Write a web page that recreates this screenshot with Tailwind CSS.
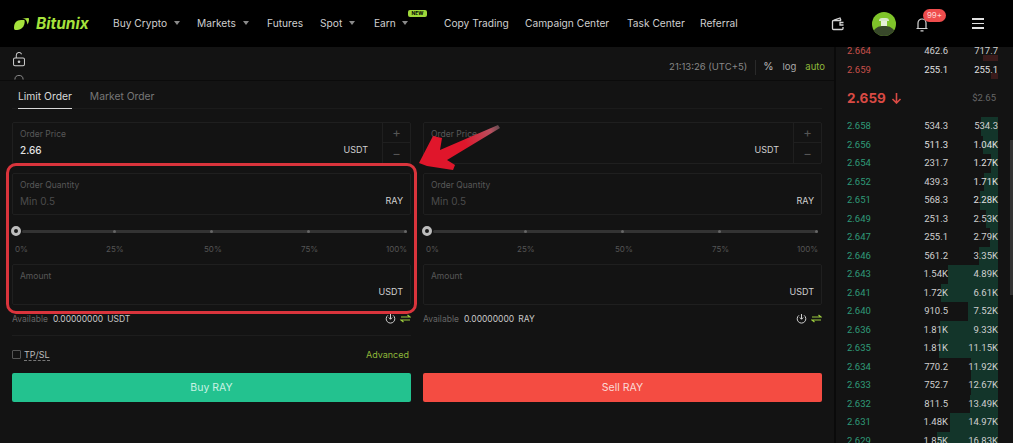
<!DOCTYPE html>
<html lang="en">
<head>
<meta charset="UTF-8" />
<meta name="viewport" content="width=device-width, initial-scale=1.0" />
<title>Bitunix</title>
<script src="https://cdn.jsdelivr.net/npm/@tailwindcss/browser@4"></script>
</head>
<body class="bg-[#131313] text-[#d8d8d8] font-['Inter',sans-serif]">
<div class="relative w-[1013px] h-[443px] overflow-hidden">

  <!-- top nav -->
  <header class="h-[47px] bg-black flex items-center relative z-10 text-[10.2px] text-[#cfcfcf]">
    <div class="w-[113px] pl-[14px] flex items-center gap-[7px] shrink-0">
      <svg class="w-[15px] h-[12px]" viewBox="0 0 15 12"><path fill="#a6e23c" d="M1.500 12C.2 12 0 11 0 9.500 0 5 2.500 2 7 2h2.500c.8 0 1.200.4 1.200 1.200C10.700 8 7.500 12 3 12H1.500Z"/><path fill="#a6e23c" d="M8 .6 14 0c.6 0 1 .4 1 1 0 2-.5 4-1.500 5.500-.3-2-.8-3.500-1.800-4.800C10.700 1 9.500.7 8 .6Z"/></svg>
      <span class="text-[15.500px] font-bold italic text-[#a6e23c] leading-none">Bitunix</span>
    </div>
    <nav class="flex items-center">
      <span class="w-[84px] flex items-center">Buy Crypto<i class="ml-[7px] w-0 h-0 border-x-[3px] border-x-transparent border-t-[4px] border-t-[#8a8a8a]"></i></span>
      <span class="w-[70px] flex items-center">Markets<i class="ml-[7px] w-0 h-0 border-x-[3px] border-x-transparent border-t-[4px] border-t-[#8a8a8a]"></i></span>
      <span class="w-[53px]">Futures</span>
      <span class="w-[54px] flex items-center">Spot<i class="ml-[7px] w-0 h-0 border-x-[3px] border-x-transparent border-t-[4px] border-t-[#8a8a8a]"></i></span>
      <span class="w-[70px] flex items-center relative">Earn<i class="ml-[6px] w-0 h-0 border-x-[3px] border-x-transparent border-t-[4px] border-t-[#8a8a8a]"></i>
        <b class="absolute left-[34px] -top-[6px] h-[7px] w-[19px] bg-[#9fd83a] rounded-[2px] text-[5px] leading-[7px] text-center text-black">NEW</b>
      </span>
      <span class="w-[81px]">Copy Trading</span>
      <span class="w-[102px]">Campaign Center</span>
      <span class="w-[73px]">Task Center</span>
      <span>Referral</span>
    </nav>
    <!-- right icons -->
    <div class="ml-auto flex items-center pr-[29px]">
      <svg class="w-[14px] h-[14px] mr-[27px]" viewBox="0 0 14 14" fill="none" stroke="#d5d5d5" stroke-width="1.300"><path d="M10 3.500H2.500a1 1 0 0 0-1 1v7a1 1 0 0 0 1 1H11a1 1 0 0 0 1-1V10M3 3l6-2 1 2.500M12.500 5.500H9v2.500h3.500"/></svg>
      <div class="w-[24px] h-[24px] rounded-full bg-[#7fc42a] overflow-hidden flex flex-col items-center mr-[19px]">
        <div class="w-[10px] h-[3px] bg-[#d8e8c8] rounded-t-full mt-[6px]"></div>
        <div class="w-[6px] h-[5px] bg-[#e6efd8]"></div>
        <div class="w-[24px] h-[10px] bg-[#38482a] rounded-t-[12px]"></div>
      </div>
      <div class="relative mr-[43px] w-[14px] h-[16px]">
        <svg class="w-[14px] h-[16px]" viewBox="0 0 14 16" fill="none" stroke="#d5d5d5" stroke-width="1.200"><path d="M1.500 12.500h11M3 12.500V7a4 4 0 0 1 8 0v5.500M5.500 14.800h3"/></svg>
        <span class="absolute left-[8px] -top-[7px] w-[23px] h-[13px] rounded-full bg-[#ef4d4d] text-[#ffd5d5] text-[8px] leading-[13px] text-center">99+</span>
      </div>
      <div class="w-[12px] flex flex-col gap-[3px]">
        <i class="block h-[1.500px] bg-[#e0e0e0]"></i>
        <i class="block h-[1.500px] bg-[#e0e0e0]"></i>
        <i class="block h-[1.500px] bg-[#e0e0e0]"></i>
      </div>
    </div>
  </header>

  <div class="flex h-[396px]">
    <!-- trade panel -->
    <main class="w-[836px] shrink-0 border-r-2 border-r-[#0a0a0a]">
      <div class="h-[34px] border-b border-b-[#0b0b0b] flex overflow-hidden">
        <div class="pl-[12px] pt-[5px] flex flex-col items-start gap-[8px]">
          <svg class="w-[14px] h-[16px]" viewBox="0 0 14 16" fill="none" stroke="#cfcfcf" stroke-width="1.100"><rect x="1" y="6.500" width="12" height="8.500" rx="1.500"/><path d="M4 6.500V3.500a3 3 0 0 1 5.800-1"/><circle cx="7" cy="10.700" r=".9" fill="#cfcfcf"/></svg>
          <svg class="w-[14px] h-[6px]" viewBox="0 0 14 6" fill="none" stroke="#8a8a8a" stroke-width="1.100"><path d="M2.500 5a4.500 4.500 0 0 1 9 0"/></svg>
        </div>
        <div class="ml-auto h-[34px] pt-[6px] flex items-center text-[9.500px] pr-[9px]">
          <span class="text-[#888]">21:13:26 (UTC+5)</span>
          <i class="h-[15px] w-px bg-[#2a2a2a] ml-[8px] mr-[7px]"></i>
          <span class="text-[#bbb] text-[10.500px] mr-[9px]">%</span>
          <span class="text-[#aaa] mr-[9px]">log</span>
          <span class="text-[#8fb83a]">auto</span>
        </div>
      </div>

      <div class="h-[28px] ml-[12px] mr-[12px] border-b border-b-[#1b1b1b] flex text-[10.300px] pl-[6px]">
        <span class="h-[28px] pt-[8px] border-b-[1.500px] border-b-[#d8d8d8] text-[#d8d8d8]">Limit Order</span>
        <span class="pt-[8px] ml-[18px] text-[#777]">Market Order</span>
      </div>

      <div class="grid grid-cols-[399px_399px] gap-[12px] px-[12px] pt-[13px]">
        <!-- buy -->
        <section class="flex flex-col h-[280px]">
          <div class="h-[42px] border border-[#1f1f1f] rounded-[2px] flex">
            <div class="flex-1 pl-[7px] pr-[14px] pt-[6px]">
              <p class="text-[8.500px] leading-[11px] text-[#585858]">Order Price</p>
              <div class="flex justify-between items-center mt-[3px] leading-[14px]"><span class="text-[10px] text-[#e2e2e2] font-medium">2.66</span><span class="text-[9px] text-[#d0d0d0]">USDT</span></div>
            </div>
            <div class="w-[28px] border-l border-l-[#1f1f1f] flex flex-col text-center text-[#555]">
              <span class="h-[21px] border-b border-b-[#1f1f1f] text-[13px] leading-[19px]">+</span>
              <span class="text-[13px] leading-[20px]">−</span>
            </div>
          </div>
          <div class="h-[42px] mt-[9px] border border-[#1f1f1f] rounded-[2px] px-[7px] pt-[6px]">
            <p class="text-[8.500px] leading-[11px] text-[#585858]">Order Quantity</p>
            <div class="flex justify-between items-center mt-[3px] leading-[14px]"><span class="text-[10px] text-[#4c4c4c]">Min 0.5</span><span class="text-[9px] text-[#d0d0d0]">RAY</span></div>
          </div>
          <div class="h-[49px]">
            <div class="relative h-[3px] mt-[15px] ml-[10px] mr-[4px] bg-[#333] rounded-full flex justify-between items-center pl-[91px]">
              <i class="absolute -left-[11px] w-[10px] h-[10px] rounded-full border-[3px] border-[#bdbdbd] bg-[#1a1a1a]"></i>
              <i class="w-[3px] h-[3px] rounded-full bg-[#666]"></i>
              <i class="w-[3px] h-[3px] rounded-full bg-[#666]"></i>
              <i class="w-[3px] h-[3px] rounded-full bg-[#666]"></i>
              <i class="w-[3px] h-[3px] rounded-full bg-[#666]"></i>
            </div>
            <div class="flex pl-[3px] text-[8px] text-[#555] mt-[11px] leading-[11px]"><span class="w-[91px]">0%</span><span class="w-[98px]">25%</span><span class="w-[97px]">50%</span><span class="w-[85px]">75%</span><span>100%</span></div>
          </div>
          <div class="h-[42px] border border-[#1f1f1f] rounded-[2px] px-[7px] pt-[6px]">
            <p class="text-[8.500px] leading-[11px] text-[#585858]">Amount</p>
            <div class="flex justify-end mt-[3px] leading-[14px] text-[9px] text-[#d0d0d0]">USDT</div>
          </div>
          <div class="h-[27px] flex items-center text-[8.500px] text-[#c8c8c8]">
            <span class="text-[#666] mr-[5px]">Available</span><span>0.00000000</span><span class="ml-[4px]">USDT</span>
            <svg class="ml-auto w-[11px] h-[11px]" viewBox="0 0 11 11" fill="none" stroke="#d0d0d0" stroke-width="1"><path d="M3 2.300a4.300 4.300 0 1 0 5 0M5.500 1v5M3.800 4.500l1.700 1.800 1.700-1.800"/></svg>
            <svg class="ml-[4px] w-[11px] h-[9px]" viewBox="0 0 11 9" fill="none" stroke="#9ccb3e" stroke-width="1.200"><path d="M1 3h9L7.500 1M10 6H1l2.500 2"/></svg>
          </div>
          <div class="h-px bg-[#1d1d1d] mt-[3px]"></div>
          <div class="h-[37px] flex items-center text-[9px]">
            <i class="w-[9px] h-[9px] border border-[#555] rounded-[1px] mr-[3px]"></i>
            <span class="text-[#bbb] border-b border-dashed border-b-[#777] leading-[11px]">TP/SL</span>
            <span class="ml-auto mr-[2px] text-[#8fb83a]">Advanced</span>
          </div>
          <button class="h-[29px] w-full rounded-[2px] bg-[#23c28f] text-[#c9f2e4] text-[10.500px]">Buy RAY</button>
        </section>

        <!-- sell -->
        <section class="flex flex-col h-[280px]">
          <div class="h-[42px] border border-[#1f1f1f] rounded-[2px] flex">
            <div class="flex-1 pl-[7px] pr-[14px] pt-[6px]">
              <p class="text-[8.500px] leading-[11px] text-[#585858]">Order Price</p>
              <div class="flex justify-end items-center mt-[3px] leading-[14px]"><span class="text-[9px] text-[#d0d0d0]">USDT</span></div>
            </div>
            <div class="w-[28px] border-l border-l-[#1f1f1f] flex flex-col text-center text-[#555]">
              <span class="h-[21px] border-b border-b-[#1f1f1f] text-[13px] leading-[19px]">+</span>
              <span class="text-[13px] leading-[20px]">−</span>
            </div>
          </div>
          <div class="h-[42px] mt-[9px] border border-[#1f1f1f] rounded-[2px] px-[7px] pt-[6px]">
            <p class="text-[8.500px] leading-[11px] text-[#585858]">Order Quantity</p>
            <div class="flex justify-between items-center mt-[3px] leading-[14px]"><span class="text-[10px] text-[#4c4c4c]">Min 0.5</span><span class="text-[9px] text-[#d0d0d0]">RAY</span></div>
          </div>
          <div class="h-[49px]">
            <div class="relative h-[3px] mt-[15px] ml-[10px] mr-[4px] bg-[#333] rounded-full flex justify-between items-center pl-[91px]">
              <i class="absolute -left-[11px] w-[10px] h-[10px] rounded-full border-[3px] border-[#bdbdbd] bg-[#1a1a1a]"></i>
              <i class="w-[3px] h-[3px] rounded-full bg-[#666]"></i>
              <i class="w-[3px] h-[3px] rounded-full bg-[#666]"></i>
              <i class="w-[3px] h-[3px] rounded-full bg-[#666]"></i>
              <i class="w-[3px] h-[3px] rounded-full bg-[#666]"></i>
            </div>
            <div class="flex pl-[3px] text-[8px] text-[#555] mt-[11px] leading-[11px]"><span class="w-[91px]">0%</span><span class="w-[98px]">25%</span><span class="w-[97px]">50%</span><span class="w-[85px]">75%</span><span>100%</span></div>
          </div>
          <div class="h-[42px] border border-[#1f1f1f] rounded-[2px] px-[7px] pt-[6px]">
            <p class="text-[8.500px] leading-[11px] text-[#585858]">Amount</p>
            <div class="flex justify-end mt-[3px] leading-[14px] text-[9px] text-[#d0d0d0]">USDT</div>
          </div>
          <div class="h-[27px] flex items-center text-[8.500px] text-[#c8c8c8]">
            <span class="text-[#666] mr-[5px]">Available</span><span>0.00000000</span><span class="ml-[4px]">RAY</span>
            <svg class="ml-auto w-[11px] h-[11px]" viewBox="0 0 11 11" fill="none" stroke="#d0d0d0" stroke-width="1"><path d="M3 2.300a4.300 4.300 0 1 0 5 0M5.500 1v5M3.800 4.500l1.700 1.800 1.700-1.800"/></svg>
            <svg class="ml-[4px] w-[11px] h-[9px]" viewBox="0 0 11 9" fill="none" stroke="#9ccb3e" stroke-width="1.200"><path d="M1 3h9L7.500 1M10 6H1l2.500 2"/></svg>
          </div>
          <div class="h-[41px]"></div>
          <button class="h-[29px] w-full rounded-[2px] bg-[#f44c42] text-[#fbd9d6] text-[10.500px]">Sell RAY</button>
        </section>
      </div>
    </main>

    <!-- order book -->
    <aside class="flex-1 relative font-['Roboto',sans-serif] text-[9.500px] leading-[18.500px]">
      <div class="-mt-[5px] pl-[11px] pr-[15px]">
        <div class="relative flex h-[18.500px]"><i class="absolute right-0 bottom-0 h-[6px] w-[15px] bg-[#3a1b1b]"></i><span class="relative w-[60px] text-[#c8504a]">2.664</span><span class="relative w-[41px] text-right text-[#cfcfcf]">462.6</span><span class="relative flex-1 text-right text-[#cfcfcf]">717.7</span></div>
        <div class="relative flex h-[18.500px]"><i class="absolute right-0 bottom-0 h-[6px] w-[7px] bg-[#3a1b1b]"></i><span class="relative w-[60px] text-[#c8504a]">2.659</span><span class="relative w-[41px] text-right text-[#e0e0e0]">255.1</span><span class="relative flex-1 text-right text-[#e0e0e0]">255.1</span></div>
        <div class="flex items-center justify-between h-[38px] pr-[2px]">
          <span class="flex items-center gap-[5px] text-[13.500px] font-['Inter',sans-serif] font-bold text-[#d94a44]">2.659
            <svg class="w-[11px] h-[12px]" viewBox="0 0 11 12" fill="none" stroke="#d94a44" stroke-width="1.600"><path d="M5.500 1v10M1.500 7l4 4 4-4"/></svg>
          </span>
          <span class="text-[#666] text-[9.500px]">$2.65</span>
        </div>
        <div class="relative flex h-[18.500px]"><i class="absolute right-0 inset-y-0 w-[17px] bg-[#13352a]"></i><span class="relative w-[60px] text-[#2f9a78]">2.658</span><span class="relative w-[41px] text-right text-[#cfcfcf]">534.3</span><span class="relative flex-1 text-right text-[#cfcfcf]">534.3</span></div>
        <div class="relative flex h-[18.500px]"><i class="absolute right-0 inset-y-0 w-[15px] bg-[#13352a]"></i><span class="relative w-[60px] text-[#2f9a78]">2.656</span><span class="relative w-[41px] text-right text-[#e0e0e0]">511.3</span><span class="relative flex-1 text-right text-[#e0e0e0]">1.04K</span></div>
        <div class="relative flex h-[18.500px]"><i class="absolute right-0 inset-y-0 w-[7px] bg-[#13352a]"></i><span class="relative w-[60px] text-[#2f9a78]">2.654</span><span class="relative w-[41px] text-right text-[#cfcfcf]">231.7</span><span class="relative flex-1 text-right text-[#e0e0e0]">1.27K</span></div>
        <div class="relative flex h-[18.500px]"><i class="absolute right-0 inset-y-0 w-[14px] bg-[#13352a]"></i><span class="relative w-[60px] text-[#2f9a78]">2.652</span><span class="relative w-[41px] text-right text-[#cfcfcf]">439.3</span><span class="relative flex-1 text-right text-[#e0e0e0]">1.71K</span></div>
        <div class="relative flex h-[18.500px]"><i class="absolute right-0 inset-y-0 w-[18px] bg-[#13352a]"></i><span class="relative w-[60px] text-[#2f9a78]">2.651</span><span class="relative w-[41px] text-right text-[#cfcfcf]">568.3</span><span class="relative flex-1 text-right text-[#e0e0e0]">2.28K</span></div>
        <div class="relative flex h-[18.500px]"><i class="absolute right-0 inset-y-0 w-[12px] bg-[#13352a]"></i><span class="relative w-[60px] text-[#2f9a78]">2.649</span><span class="relative w-[41px] text-right text-[#cfcfcf]">251.3</span><span class="relative flex-1 text-right text-[#cfcfcf]">2.53K</span></div>
        <div class="relative flex h-[18.500px]"><i class="absolute right-0 inset-y-0 w-[8px] bg-[#13352a]"></i><span class="relative w-[60px] text-[#2f9a78]">2.647</span><span class="relative w-[41px] text-right text-[#cfcfcf]">255.1</span><span class="relative flex-1 text-right text-[#cfcfcf]">2.79K</span></div>
        <div class="relative flex h-[18.500px]"><i class="absolute right-0 inset-y-0 w-[19px] bg-[#13352a]"></i><span class="relative w-[60px] text-[#2f9a78]">2.646</span><span class="relative w-[41px] text-right text-[#cfcfcf]">561.2</span><span class="relative flex-1 text-right text-[#cfcfcf]">3.35K</span></div>
        <div class="relative flex h-[18.500px]"><i class="absolute right-0 inset-y-0 w-[50px] bg-[#13352a]"></i><span class="relative w-[60px] text-[#2f9a78]">2.643</span><span class="relative w-[41px] text-right text-[#cfcfcf]">1.54K</span><span class="relative flex-1 text-right text-[#cfcfcf]">4.89K</span></div>
        <div class="relative flex h-[18.500px]"><i class="absolute right-0 inset-y-0 w-[57px] bg-[#13352a]"></i><span class="relative w-[60px] text-[#2f9a78]">2.641</span><span class="relative w-[41px] text-right text-[#cfcfcf]">1.72K</span><span class="relative flex-1 text-right text-[#cfcfcf]">6.61K</span></div>
        <div class="relative flex h-[18.500px]"><i class="absolute right-0 inset-y-0 w-[30px] bg-[#13352a]"></i><span class="relative w-[60px] text-[#2f9a78]">2.640</span><span class="relative w-[41px] text-right text-[#cfcfcf]">910.5</span><span class="relative flex-1 text-right text-[#cfcfcf]">7.52K</span></div>
        <div class="relative flex h-[18.500px]"><i class="absolute right-0 inset-y-0 w-[58px] bg-[#13352a]"></i><span class="relative w-[60px] text-[#2f9a78]">2.636</span><span class="relative w-[41px] text-right text-[#cfcfcf]">1.81K</span><span class="relative flex-1 text-right text-[#cfcfcf]">9.33K</span></div>
        <div class="relative flex h-[18.500px]"><i class="absolute right-0 inset-y-0 w-[59px] bg-[#13352a]"></i><span class="relative w-[60px] text-[#2f9a78]">2.635</span><span class="relative w-[41px] text-right text-[#cfcfcf]">1.81K</span><span class="relative flex-1 text-right text-[#cfcfcf]">11.15K</span></div>
        <div class="relative flex h-[18.500px]"><i class="absolute right-0 inset-y-0 w-[27px] bg-[#13352a]"></i><span class="relative w-[60px] text-[#2f9a78]">2.634</span><span class="relative w-[41px] text-right text-[#cfcfcf]">770.2</span><span class="relative flex-1 text-right text-[#cfcfcf]">11.92K</span></div>
        <div class="relative flex h-[18.500px]"><i class="absolute right-0 inset-y-0 w-[27px] bg-[#13352a]"></i><span class="relative w-[60px] text-[#2f9a78]">2.633</span><span class="relative w-[41px] text-right text-[#cfcfcf]">752.7</span><span class="relative flex-1 text-right text-[#cfcfcf]">12.67K</span></div>
        <div class="relative flex h-[18.500px]"><i class="absolute right-0 inset-y-0 w-[28px] bg-[#13352a]"></i><span class="relative w-[60px] text-[#2f9a78]">2.632</span><span class="relative w-[41px] text-right text-[#cfcfcf]">811.5</span><span class="relative flex-1 text-right text-[#cfcfcf]">13.49K</span></div>
        <div class="relative flex h-[18.500px]"><i class="absolute right-0 inset-y-0 w-[48px] bg-[#13352a]"></i><span class="relative w-[60px] text-[#2f9a78]">2.631</span><span class="relative w-[41px] text-right text-[#cfcfcf]">1.48K</span><span class="relative flex-1 text-right text-[#cfcfcf]">14.97K</span></div>
        <div class="relative flex h-[18.500px]"><i class="absolute right-0 inset-y-0 w-[61px] bg-[#13352a]"></i><span class="relative w-[60px] text-[#2f9a78]">2.629</span><span class="relative w-[41px] text-right text-[#cfcfcf]">1.85K</span><span class="relative flex-1 text-right text-[#cfcfcf]">16.83K</span></div>
      </div>
      <!-- scrollbar -->
      <i class="absolute right-0 top-[93px] w-[3px] h-[155px] bg-[#333]"></i>
    </aside>
  </div>

  <!-- annotation drawn over the screenshot -->
  <div class="absolute left-[6px] top-[163px] w-[411px] h-[151px] border-[3px] border-[#d9343c] rounded-[10px] pointer-events-none"></div>
  <svg class="absolute left-[415px] top-[120px] w-[90px] h-[55px] pointer-events-none" viewBox="0 0 90 55">
    <defs>
      <linearGradient id="tail" x1="20" y1="35" x2="85" y2="6" gradientUnits="userSpaceOnUse">
        <stop offset="0.45" stop-color="#e0162b"/>
        <stop offset="0.85" stop-color="#b8505f"/>
        <stop offset="1" stop-color="#5a4a4e"/>
      </linearGradient>
    </defs>
    <polygon fill="url(#tail)" points="4,43 18,16 27,18 25,30 83,5 85,8 32,40 40,45 38,50 12,46"/>
  </svg>
</div>
</body>
</html>
